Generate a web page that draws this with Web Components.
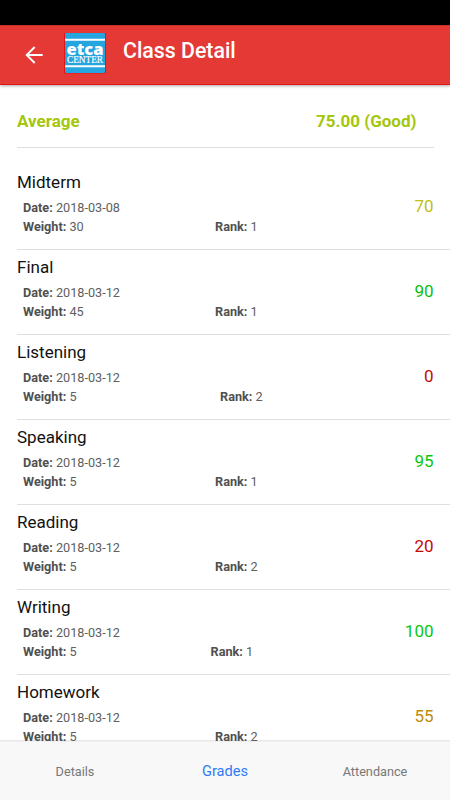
<!DOCTYPE html>
<html lang="en"><head><meta charset="utf-8"><title>Class Detail</title>
<style>html,body{margin:0;height:100%;overflow:hidden;background:#fff;font-family:Roboto,sans-serif}</style></head>
<body><class-app></class-app>
<script>
class TopBar extends HTMLElement{
 constructor(){super();this.attachShadow({mode:'open'}).innerHTML=`
<style>:host{display:flex;flex:none;box-sizing:border-box;height:60px;background:#e53935;color:#fff;align-items:center;padding-left:24px;position:relative;z-index:1;border-top:1px solid #c62f2b;border-bottom:1px solid #e31313;box-shadow:0 1px 3px rgba(0,0,0,.35)}
.back{width:20px;height:20px;display:block;margin:0 20px 0 0}
.logo{width:42px;height:41px;display:block;margin:-3px 17px 0 0}
h1{font-size:21.3px;font-weight:500;line-height:26px;margin:-9px 0 0;white-space:nowrap}</style>
<svg class="back" viewBox="0 0 20 20" fill="none" stroke="#fff" stroke-width="1.900"><path d="M18.700 10H3M10.700 2L2.700 10l8 8"/></svg>
<svg class="logo" viewBox="0 0 42 41"><rect width="42" height="40.600" rx="1" fill="#e31313"/><rect x="1" width="40" height="40" rx="1" fill="#25a5e0"/><path d="M1 6.800H41M1 33.200H41" stroke="#fff" stroke-width="1.900"/><text x="21" y="21.600" text-anchor="middle" textLength="37" lengthAdjust="spacingAndGlyphs" font-family="Open Sans" font-weight="800" font-size="15.500" fill="#fff">etca</text><text x="21" y="30.400" text-anchor="middle" textLength="36" lengthAdjust="spacingAndGlyphs" font-family="Liberation Serif" font-size="10.800" fill="#fff" stroke="#fff" stroke-width=".2">CENTER</text></svg>
<h1><slot></slot></h1>`}}
customElements.define('top-bar',TopBar);
class AverageRow extends HTMLElement{
 constructor(){super();this.attachShadow({mode:'open'}).innerHTML=`
<style>:host{display:flex;flex:none;box-sizing:border-box;justify-content:space-between;margin:0 16.500px 0 17px;padding:26px 17px 0 0;height:63px;border-bottom:1px solid #dedede;color:#a4c60c;font-size:17px;line-height:20px;font-weight:700}</style><span>Average</span><slot></slot>`}}
customElements.define('average-row',AverageRow);
class GradeItem extends HTMLElement{
 connectedCallback(){const a=n=>this.getAttribute(n);this.attachShadow({mode:'open'}).innerHTML=`
<style>:host{display:grid;box-sizing:border-box;grid-template-columns:1fr auto;height:85px;flex:none;margin-left:17px;padding:7px 16.500px 0 0;border-bottom:1px solid #dfdfdf;align-items:start}
h2{font-size:17px;line-height:20px;font-weight:400;margin:0;color:#111}
.m{font-size:12.700px;line-height:19px;color:#606060;padding:6px 0 0 6px}
.r{display:grid;grid-template-columns:var(--rank) auto;justify-content:start}b{font-weight:700;color:#505050}
.s{font-size:17px;line-height:20px;padding-top:24px}</style>
<div><h2>${a('name')}</h2><div class="m"><div><b>Date:</b> ${a('date')}</div><div class="r"><span><b>Weight:</b> ${a('weight')}</span><span><b>Rank:</b> ${a('rank')}</span></div></div></div><div class="s" style="color:${a('color')}">${a('score')}</div>`;
 this.style.setProperty('--rank',a('offset')+'px')}}
customElements.define('grade-item',GradeItem);
class TabBar extends HTMLElement{
 constructor(){super();this.attachShadow({mode:'open'}).innerHTML=`
<style>:host{display:grid;grid-template-columns:repeat(3,1fr);flex:none;box-sizing:border-box;height:59px;background:#f8f8f8;border-top:1px solid #efefef;text-align:center;align-items:center;font-size:12.700px;color:#777}
.on{color:#2f7df6;font-size:14.600px}</style><span>Details</span><span class="on">Grades</span><span>Attendance</span>`}}
customElements.define('tab-bar',TabBar);
class ClassApp extends HTMLElement{
 constructor(){super();const d=[['Midterm','2018-03-08',30,1,70,192,'#c0c010'],['Final','2018-03-12',45,1,90,192,'#0cc00c'],['Listening','2018-03-12',5,2,0,197,'#c40808'],['Speaking','2018-03-12',5,1,95,192,'#0cc60c'],['Reading','2018-03-12',5,2,20,192,'#c40808'],['Writing','2018-03-12',5,1,100,187.5,'#0cc60c'],['Homework','2018-03-12',5,2,55,192,'#c08c08']];
 this.attachShadow({mode:'open'}).innerHTML=`
<style>:host{display:flex;flex-direction:column;height:800px;width:450px;overflow:hidden;background:#fff}.status{height:25px;background:#000;flex:none}main{flex:1;min-height:0;overflow:hidden;display:flex;flex-direction:column;background:linear-gradient(#e9e9e9,#e9e9e9) bottom/100% 1px no-repeat}.list{padding-top:17px;flex:none}</style>
<div class="status"></div><top-bar>Class Detail</top-bar><main><average-row>75.00 (Good)</average-row><div class="list">${d.map(([n,t,w,r,s,o,c])=>`<grade-item name="${n}" date="${t}" weight="${w}" rank="${r}" score="${s}" offset="${o}" color="${c}"></grade-item>`).join('')}</div></main><tab-bar></tab-bar>`}}
customElements.define('class-app',ClassApp);
</script></body></html>
